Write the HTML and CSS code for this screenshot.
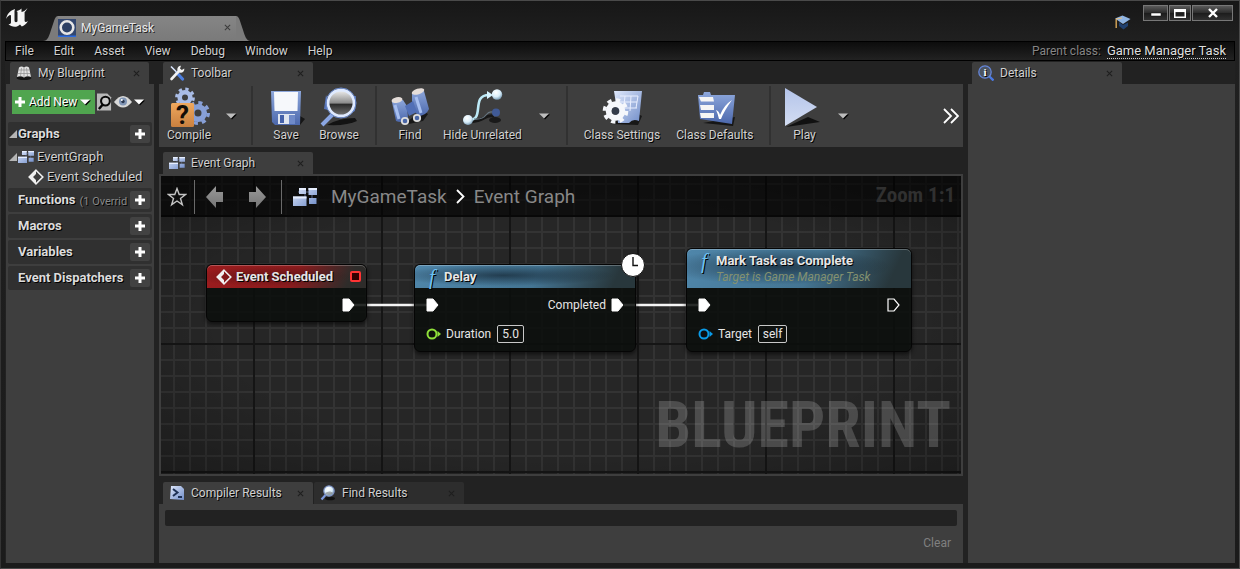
FILE: index.html
```html
<!DOCTYPE html>
<html lang="en">
<head>
<meta charset="utf-8">
<title>MyGameTask</title>
<link rel="stylesheet" href="styles.css">
</head>
<body>
<svg class="defs" width="0" height="0" aria-hidden="true">
  <defs>
    <linearGradient id="blue" x1="0" y1="0" x2="1" y2="1"><stop offset="0" stop-color="#dfe8fb"/><stop offset="1" stop-color="#6f8cc8"/></linearGradient>
    <linearGradient id="pale" x1="0" y1="0" x2="0" y2="1"><stop offset="0" stop-color="#b4c4ea"/><stop offset="1" stop-color="#d3ddf2"/></linearGradient>
    <linearGradient id="deep" x1="0" y1="0" x2="0" y2="1"><stop offset="0" stop-color="#8ea8dc"/><stop offset="1" stop-color="#4c68ac"/></linearGradient>
    <linearGradient id="orange" x1="0" y1="0" x2="0" y2="1"><stop offset="0" stop-color="#efa85e"/><stop offset="1" stop-color="#c9803f"/></linearGradient>
    <linearGradient id="grey" x1="0" y1="0" x2="0" y2="1"><stop offset="0" stop-color="#9a9a9a"/><stop offset="1" stop-color="#747474"/></linearGradient>
    <linearGradient id="lens" x1="0" y1="0" x2="0" y2="1"><stop offset="0" stop-color="#f2f2f2"/><stop offset=".5" stop-color="#8b8b8b"/><stop offset=".55" stop-color="#2b2b2b"/><stop offset="1" stop-color="#777"/></linearGradient>
    <radialGradient id="ball" cx=".4" cy=".3" r=".7"><stop offset="0" stop-color="#fff"/><stop offset=".6" stop-color="#d9eefa"/><stop offset="1" stop-color="#7fa0b8"/></radialGradient>
    <symbol id="graph" viewBox="0 0 24 20">
      <path d="M5 5h14M12 5v8M19 8v4" stroke="#5d6a8c" fill="none"/>
      <path d="M6 1h7v6H6zM15.500 1H24v7h-8.500zM0 9.500h13.500V19H0zM16 11h7.500v6H16z" fill="url(#blue)"/>
      <path d="M6 1h7v2H6zM15.500 1H24v2h-8.500zM0 9.500h13.500v2H0z" fill="#e6eeff"/>
    </symbol>
    <symbol id="plus" viewBox="0 0 12 12"><path d="M4.500 1h3v3.500H11v3H7.500V11h-3V7.500H1v-3h3.500z" fill="#fff"/></symbol>
    <symbol id="diamond" viewBox="0 0 16 16"><path d="M8 1.200 14.800 8 8 14.800 1.200 8z" fill="none" stroke="#f0f0f0" stroke-width="1.600"/><path d="M8 1 1 8l7 7v-4L5 8l3-3z" fill="#f0f0f0"/></symbol>
    <symbol id="down" viewBox="0 0 10 6"><path d="M0 .500h10L5 5.500z" fill="currentColor"/></symbol>
    <symbol id="pin" viewBox="0 0 13 14"><path d="M1 1h6l5 6-5 6H1z" fill="#fff" stroke="#fff" stroke-linejoin="round"/></symbol>
    <symbol id="glass" viewBox="0 0 16 16"><ellipse cx="10" cy="13.500" rx="5" ry="1.800" fill="#111"/><path d="m5.500 10-4 4.500" stroke="#7e9be0" stroke-width="2.200"/><circle cx="9" cy="6" r="5.200" fill="url(#ball)" stroke="#7b8fc0" stroke-width="1.200"/><path d="M5 8a5 5 0 0 0 8 0c-2-2-5-2-8 0z" fill="#777" opacity=".6"/></symbol>
    <symbol id="x" viewBox="0 0 8 8"><path d="m1 1 6 6M7 1 1 7" stroke="currentColor" stroke-width="1.200"/></symbol>
  </defs>
</svg>

<div class="window">
  <header class="titlebar">
    <svg class="logo" viewBox="0 0 24 20" aria-label="Unreal Engine"><path fill="#f4f4f4" d="M0 11C1 6 4 2.500 9 1L8.500 3v9.500c0 1.800 2 2.200 3 .8V4.500c0-.9-.5-1.200-1.300-1.300C12 2.800 14 2 15.500.600V4c2.500-.6 4-1.700 6-4-.8 1.900-2 3.500-2.900 4v9c.4 1.300 1.800 1.300 3.400-.1-1.500 3.100-4 4.500-6.200 5.700L14 16.500c-1.600 1.500-3.400 2.300-5.200 2.300-2.500 0-4.700-1-6.300-2.800 1.600.3 2.500-.3 2.500-1.700V8.500C5 7.200 4.600 6.700 3.500 7.300 2 8.100 1 9.300 0 11z"/></svg>
    <div class="doc-tab">
      <svg class="doc-edge" viewBox="0 0 15 25"><path d="M0 25C5 25 6 20 8 14L11 5Q12.500 0 15 0V25z"/></svg>
      <div class="doc-body">
        <svg class="doc-icon" viewBox="0 0 18 18"><path fill="#33476f" d="M0 0h18v18H0z"/><path fill="#2b6be0" d="M0 16.500h18V18H0z"/><circle cx="9" cy="8.500" r="6.300" fill="#2d4064" stroke="#e6e6e6" stroke-width="2.600"/></svg>
        <span class="doc-name">MyGameTask</span>
        <button class="close" aria-label="Close MyGameTask"><svg><use href="#x"/></svg></button>
      </div>
      <svg class="doc-edge" viewBox="0 0 15 25"><path d="M0 0Q2.500 0 4 5L7 14C9 20 10 25 15 25H0z"/></svg>
    </div>
    <div class="title-right">
      <button class="tutorial" aria-label="Tutorials"><svg viewBox="0 0 16 16"><path fill="#20406e" d="m4 7 4 3 5-2.500V11l-4.500 3.500L4 11z"/><path fill="#8fb4e2" d="M0 3.500 7.500.500 15.500 4 8 9z"/><path d="m1.200 4 0 9" stroke="#d9a85a" stroke-width="1.400"/><path d="m1 4 6-1" stroke="#e8c080"/></svg></button>
      <div class="win-buttons">
        <button aria-label="Minimize"><svg viewBox="0 0 12 12"><path fill="#fff" stroke="#111" stroke-width=".5" d="M1 6h10v3H1z"/></svg></button>
        <button class="win-max" aria-label="Maximize"><svg viewBox="0 0 12 12"><path fill="#fff" fill-rule="evenodd" d="M0 2h12v9H0zM1.500 5v4.500h9V5z"/></svg></button>
        <button class="win-close" aria-label="Close"><svg viewBox="0 0 12 12"><path d="m2 2 8 8M10 2l-8 8" stroke="#fff" stroke-width="2.400"/></svg></button>
      </div>
    </div>
  </header>

  <nav class="menubar" aria-label="Main menu">
    <button>File</button><button>Edit</button><button>Asset</button><button>View</button><button>Debug</button><button>Window</button><button>Help</button>
    <span class="parent-label">Parent class:</span><a href="#parent" class="parent-link">Game Manager Task</a>
  </nav>

  <main class="workspace">
    <aside class="column">
      <div class="tabs"><div class="tab tab-short">
        <svg class="ic16" viewBox="0 0 16 16"><ellipse cx="8" cy="13" rx="7.500" ry="2" fill="#151515"/><path fill="#e2e2e2" d="M3 2.500q2.500-1.800 5 0q2.500-1.800 5 0l2 9.500q-3.500-1.500-7 .5q-3.500-2-7-.5z"/><path d="M8 2.500v10M5.500 3l-1 8M10.500 3l1 8M3 5h10M2 8.500h12" stroke="#8e8e8e" stroke-width=".7"/></svg>
        <span>My Blueprint</span><button class="close" aria-label="Close My Blueprint"><svg><use href="#x"/></svg></button></div></div>
      <section class="panel blueprint">
        <div class="bp-tools">
          <button class="add-new"><svg class="ic12"><use href="#plus"/></svg>Add New<svg class="caret"><use href="#down"/></svg></button>
          <button class="find-btn" aria-label="Search"><svg viewBox="0 0 16 18"><path fill="#b8b8b8" d="M0 0h11l4 4v14H0z"/><circle cx="9" cy="8" r="4.700" fill="#c9c9c9" stroke="#080808" stroke-width="2.200"/><path d="m6 12-4 4.500" stroke="#080808" stroke-width="2.600"/></svg></button>
          <button class="view-btn" aria-label="View options"><svg class="eye" viewBox="0 0 18 12"><path fill="#d8d8d8" d="M0 6q9-12 18 0-9 11-18 0z"/><circle cx="9" cy="5.500" r="4" fill="#8095b5"/><circle cx="9" cy="5.500" r="1.700" fill="#2a3850"/><circle cx="7.800" cy="4" r="1" fill="#fff"/></svg><svg class="caret"><use href="#down"/></svg></button>
        </div>
        <div class="category"><svg class="expander" viewBox="0 0 7 7"><path d="M7 0v7H0z"/></svg><h2>Graphs</h2><button aria-label="Add graph"><svg class="ic12"><use href="#plus"/></svg></button></div>
        <div class="tree">
          <div class="tree-row"><svg class="expander" viewBox="0 0 7 7"><path d="M7 0v7H0z"/></svg><svg class="ic16"><use href="#graph"/></svg>EventGraph</div>
          <div class="tree-row tree-child"><svg class="ic16"><use href="#diamond"/></svg>Event Scheduled</div>
        </div>
        <div class="category"><h2>Functions</h2><small>(1 Overrid</small><button aria-label="Add function"><svg class="ic12"><use href="#plus"/></svg></button></div>
        <div class="category"><h2>Macros</h2><button aria-label="Add macro"><svg class="ic12"><use href="#plus"/></svg></button></div>
        <div class="category"><h2>Variables</h2><button aria-label="Add variable"><svg class="ic12"><use href="#plus"/></svg></button></div>
        <div class="category"><h2>Event Dispatchers</h2><button aria-label="Add event dispatcher"><svg class="ic12"><use href="#plus"/></svg></button></div>
      </section>
    </aside>

    <div class="column">
      <div class="tabs"><div class="tab">
        <svg class="ic16" viewBox="0 0 16 16"><path d="m2 1.500 6 6" stroke="#dce8ff" stroke-width="1.600"/><path d="m8 8 5.500 6" stroke="#4d7fe0" stroke-width="3.200" stroke-linecap="round"/><path d="m2.500 14 8-8.500" stroke="#f2f2f2" stroke-width="2.600" stroke-linecap="round"/><path d="M15.200 3.500A3.500 3.500 0 1 1 12 .800L11 3.500 12.800 5z" fill="#f2f2f2"/></svg>
        <span>Toolbar</span><button class="close" aria-label="Close Toolbar"><svg><use href="#x"/></svg></button></div></div>
      <div class="toolbar">
        <button class="tool"><svg viewBox="0 0 40 40"><g fill="none"><circle cx="16" cy="10.500" r="5.300" stroke="#a9bce6" stroke-width="4.600"/><circle cx="16" cy="10.500" r="8.400" stroke="#a9bce6" stroke-width="3" stroke-dasharray="3.300 3.300"/><circle cx="29" cy="26" r="6.300" stroke="#879fd6" stroke-width="5.600"/><circle cx="29" cy="26" r="10.300" stroke="#879fd6" stroke-width="3.400" stroke-dasharray="4.045 4.045"/></g><rect x="2" y="16" width="23" height="24" rx="1.500" fill="url(#orange)"/><text x="13.500" y="37" text-anchor="middle" class="question">?</text></svg><span>Compile</span></button>
        <button class="drop drop-narrow" aria-label="Compile options"><svg class="caret"><use href="#down"/></svg></button>
        <i class="sep"></i>
        <button class="tool"><svg viewBox="0 0 40 40"><path fill="#161616" d="m10 37 24 1 5-6-5-3z"/><path fill="url(#deep)" d="M5 4h30l-1 34H9l-3-3z"/><path fill="#f6f8fb" d="M8 5h24l-.5 19h-23z"/><path fill="#dfe5f0" d="M12 27h17v10H12z"/><path fill="#4461aa" d="M14 28h4v8h-4z"/><path fill="#6f8ac8" d="M23 28h6v9h-6z"/></svg><span>Save</span></button>
        <button class="tool"><svg viewBox="0 0 40 40"><path fill="#131313" d="M8 38q12-7 28-7l2 3q-10 5-30 4z"/><path d="M7 8 5 22l8 2M34 9h3l-1 15-6 3" fill="#5774b8"/><path d="m14 27-11 11" stroke="#8ba7e4" stroke-width="4"/><circle cx="22" cy="16" r="13" fill="url(#lens)" stroke="#dfeaff" stroke-width="2.800"/><circle cx="22" cy="16" r="15" fill="none" stroke="#6c8bcc"/></svg><span>Browse</span></button>
        <i class="sep"></i>
        <button class="tool"><svg viewBox="0 0 40 40"><path fill="#171717" d="m14 38 19-4 5-7-7-4z"/><path fill="url(#deep)" d="M2 15q5-4 11-2l4 6 1 12q-5 6-12 3z"/><path fill="url(#deep)" d="M22 6q6-5 12-2l5 18q-3 7-11 7l-6-9z"/><path d="m15 19 8-5 4 11-8 4z" fill="#516fb6"/><path d="m5 18 4 14M26 10l5 16" stroke="#a7bff0" stroke-width="3"/><ellipse cx="7" cy="13" rx="5.500" ry="2.800" fill="#e5ddd9" transform="rotate(-12 7 13)"/><ellipse cx="28" cy="4.500" rx="6.500" ry="2.800" fill="#e5ddd9" transform="rotate(-18 28 4.500)"/><circle cx="15" cy="34" r="3.200" fill="#4966a7" stroke="#ddd" stroke-width="1.800"/><circle cx="27" cy="31" r="3.200" fill="#4966a7" stroke="#ddd" stroke-width="1.800"/></svg><span>Find</span></button>
        <button class="tool"><svg viewBox="0 0 40 40"><path d="M8 35q9-1 14-4t10-2" stroke="#161616" stroke-width="3" fill="none"/><ellipse cx="33" cy="33" rx="6" ry="3" fill="#1a1a1a"/><path d="M6 33C24 34 8 8 27 8" stroke="#bdeaf7" stroke-width="2.600" fill="none"/><path fill="#d6f4ff" d="m25 4 6 4-6 4z"/><path d="M12 32q8 1 12-4t8-2" stroke="#65747f" stroke-width="1.200" fill="none"/><circle cx="6" cy="33" r="5" fill="url(#ball)"/><circle cx="35" cy="7.500" r="5.200" fill="url(#ball)"/><circle cx="34" cy="25.500" r="4" fill="#405a96"/></svg><span>Hide Unrelated</span></button>
        <button class="drop" aria-label="Hide Unrelated options"><svg class="caret"><use href="#down"/></svg></button>
        <i class="sep"></i>
        <button class="tool"><svg viewBox="0 0 40 40"><path fill="#171717" d="m9 37 27 1 4-9-8-4z"/><path fill="url(#blue)" d="M12 4h28l-3 30q-6-3-10 2H16q-1-15-4-32z"/><path d="M18 9h18M17 15h18M20 21h15M23 9l-1 9M29 9l-1 15M36 9l-2 12" stroke="#e9efff" fill="none"/><circle cx="13.500" cy="24" r="6.800" fill="none" stroke="#f5f7fb" stroke-width="6"/><circle cx="13.500" cy="24" r="11" fill="none" stroke="#f5f7fb" stroke-width="3.600" stroke-dasharray="4.320 4.320"/><circle cx="13.500" cy="24" r="3.800" fill="#333b49"/></svg><span>Class Settings</span></button>
        <button class="tool"><svg viewBox="0 0 40 40"><path fill="#161616" d="m8 36 30 3 2-9z"/><path fill="url(#deep)" d="M3 8h5l1-3h6l1 3h24l-3 29L5 32z"/><path d="M4 10h14l1 4.500H6zM5 18h14v5H6zM5 26h14v5H6z" fill="#f5f5f5"/><path d="M21 23q3 1 4 5 4-10 12-15-8 11-11 19h-2q-1-5-3-9z" fill="#fff"/></svg><span>Class Defaults</span></button>
        <i class="sep"></i>
        <button class="tool"><svg viewBox="0 0 40 40"><path fill="#111" d="m2 40 34-5-12-5z"/><path fill="url(#pale)" d="M1 1 33 20 1 39z"/></svg><span>Play</span></button>
        <button class="drop" aria-label="Play options"><svg class="caret"><use href="#down"/></svg></button>
        <button class="more" aria-label="More tools"><svg viewBox="0 0 16 16"><path d="m1 1 7 7-7 7M8 1l7 7-7 7" fill="none" stroke="#fff" stroke-width="1.800"/></svg></button>
      </div>

      <div class="tabs tabs-graph"><div class="tab"><svg class="ic16"><use href="#graph"/></svg><span>Event Graph</span><button class="close" aria-label="Close Event Graph"><svg><use href="#x"/></svg></button></div></div>
      <section class="canvas" aria-label="Event Graph">
        <div class="crumbs">
          <button aria-label="Favorite"><svg class="star" viewBox="0 0 20 20"><path d="m10 1.500 2.200 6h6.300l-5 3.900 1.900 6.300L10 14l-5.400 3.700 1.900-6.300-5-3.900h6.300z" fill="none" stroke="#c4c4c4" stroke-width="1.400"/></svg></button>
          <i class="crumb-sep"></i>
          <button class="nav" aria-label="Back"><svg viewBox="0 0 18 22"><path d="M0 11 10 0v6h7v10h-7v6z" fill="url(#grey)"/></svg></button>
          <button class="nav" aria-label="Forward"><svg viewBox="0 0 18 22"><path d="M18 11 8 0v6H1v10h7v6z" fill="url(#grey)"/></svg></button>
          <i class="crumb-sep"></i>
          <svg class="crumb-icon"><use href="#graph"/></svg>
          <button class="crumb">MyGameTask</button>
          <svg class="crumb-arrow" viewBox="0 0 9 15"><path d="m1 1 6.500 6.500L1 14" fill="none" stroke="#fff" stroke-width="1.800"/></svg>
          <button class="crumb">Event Graph</button>
          <span class="zoom">Zoom 1:1</span>
        </div>
        <div class="watermark">BLUEPRINT</div>
        <svg class="wires" aria-hidden="true"><path d="M192 129h75M463 129h74" stroke="#f4f4f4" stroke-width="2.600"/></svg>

        <article class="node node-event">
          <header class="node-head"><svg class="ic16"><use href="#diamond"/></svg><h3>Event Scheduled</h3><span class="delegate"></span></header>
          <div class="pins"><span class="pin-row pin-end"><svg class="exec"><use href="#pin"/></svg></span></div>
        </article>

        <article class="node node-delay">
          <header class="node-head"><i class="fn">f</i><h3>Delay</h3></header>
          <div class="pins">
            <div class="pin-row"><svg class="exec"><use href="#pin"/></svg><span class="pin-end">Completed<svg class="exec"><use href="#pin"/></svg></span></div>
            <div class="pin-row"><svg class="data" viewBox="0 0 15 12"><circle cx="6" cy="6" r="4.500" fill="#0d120b" stroke="#8fe03a" stroke-width="2"/><path d="m11.500 3 3.500 3-3.500 3z" fill="#8fe03a"/></svg><label for="duration">Duration</label><input id="duration" class="value" value="5.0"></div>
          </div>
          <svg class="clock" viewBox="0 0 24 24"><circle cx="12" cy="12" r="11.500" fill="#fff" stroke="#111"/><path d="M12 4v8.500h5" fill="none" stroke="#111" stroke-width="1.400"/></svg>
        </article>

        <article class="node node-mark">
          <header class="node-head"><i class="fn">f</i><div><h3>Mark Task as Complete</h3><p>Target is Game Manager Task</p></div></header>
          <div class="pins">
            <div class="pin-row"><svg class="exec"><use href="#pin"/></svg><span class="pin-end"><svg class="exec" viewBox="0 0 13 14"><path d="M1 1h6l5 6-5 6H1z" fill="none" stroke="#fff" stroke-width="1.200"/></svg></span></div>
            <div class="pin-row"><svg class="data" viewBox="0 0 15 12"><circle cx="6" cy="6" r="4.500" fill="#0b0f12" stroke="#0a9be8" stroke-width="2"/><path d="m11.500 3 3.500 3-3.500 3z" fill="#0a9be8"/></svg><label for="target">Target</label><input id="target" class="value value-self" value="self"></div>
          </div>
        </article>
      </section>

      <div class="tabs tabs-results">
        <div class="tab"><svg class="ic16" viewBox="0 0 16 16"><path fill="url(#blue)" d="M2 1h10l3 3v11L1 14z"/><path d="m4 4 4.500 3.500L4 11M9 12h4" fill="none" stroke="#1e3155" stroke-width="2"/></svg><span>Compiler Results</span><button class="close" aria-label="Close Compiler Results"><svg><use href="#x"/></svg></button></div>
        <div class="tab tab-idle"><svg class="ic16"><use href="#glass"/></svg><span>Find Results</span><button class="close" aria-label="Close Find Results"><svg><use href="#x"/></svg></button></div>
      </div>
      <section class="results"><div class="log" role="log"></div><button class="clear">Clear</button></section>
    </div>

    <aside class="column">
      <div class="tabs"><div class="tab"><svg class="ic16" viewBox="0 0 16 16"><path d="m11 11 4.500 4.500" stroke="#4a78e0" stroke-width="2.400"/><circle cx="7" cy="7" r="6.200" fill="#4c5563" stroke="#6485d8" stroke-width="1.300"/><text x="7" y="11" text-anchor="middle" class="info">i</text></svg><span>Details</span><button class="close" aria-label="Close Details"><svg><use href="#x"/></svg></button></div></div>
      <section class="panel"></section>
    </aside>
  </main>
</div>
</body>
</html>
```
FILE: styles.css
```css
* { box-sizing: border-box; }
body { margin: 0; background: #1b1b1b; color: #d0d0d0; font: 12px/16px Roboto, "Liberation Sans", sans-serif; }
button { margin: 0; padding: 0; border: 0; background: none; color: inherit; font: inherit; text-shadow: inherit; }
svg { display: block; flex: none; }
h2, h3, p { margin: 0; }
h2, h3 { font-size: 13px; }
.defs { position: absolute; }

.window { display: flex; flex-direction: column; min-height: 100vh; padding: 0 4px 5px; border: 1px solid #4a4a4a; border-left-color: #343434; text-shadow: 1px 1px 0 #000; background: linear-gradient(#171717, #202020 40px, #1b1b1b); }

.titlebar { display: flex; align-items: flex-start; height: 40px; }
.logo { width: 24px; height: 20px; margin: 7px 0 0 1px; overflow: visible; }
.doc-tab { display: flex; margin: 15px 0 0 13px; height: 25px; }
.doc-edge { width: 15px; height: 25px; fill: #7b7b7b; }
.doc-body { display: flex; align-items: center; width: 178px; padding: 0 3px 2px 0; background: linear-gradient(#858585, #7a7a7a); color: #e8e8e8; }
.doc-body .close { color: #3c3c3c; }
.doc-icon { width: 18px; height: 18px; margin-right: 5px; }
.doc-name { text-shadow: 1px 1px 0 #222; }
.title-right { display: flex; margin-left: auto; }
.tutorial svg { width: 16px; height: 16px; }
.tutorial { margin: 14px 12px 0 0; height: 16px; }
.win-buttons { display: flex; gap: 1px; margin: 4px 2px 0 0; }
.win-buttons button { display: grid; place-items: center; width: 25px; height: 16px; border: 1px solid #777; background: linear-gradient(#5a5a5a, #2b2b2b 50%, #1c1c1c 51%, #303030); }
.win-buttons .win-max { width: 22px; }
.win-buttons .win-close { width: 41px; }
.win-buttons svg { width: 12px; height: 12px; }

.close { display: grid; place-items: center; width: 12px; height: 12px; margin-left: auto; color: #1e1e1e; }
.close svg { width: 7px; height: 7px; }

.menubar { display: flex; align-items: center; height: 20px; padding: 0 8px 0 9px; border: 1px solid #000; background: linear-gradient(#0c0c0c, #222); }
.menubar button { margin-right: 20px; }
.parent-label { margin-left: auto; margin-right: 6px; color: #858585; }
.parent-link { color: #dedede; font-size: 13px; line-height: 15px; text-decoration: none; border-bottom: 1px dotted #ccc; }

.workspace { flex: 1; display: grid; grid-template-columns: 148fr 804fr 267fr; gap: 5px; padding: 1px 0 0 1px; background: #222; }
.column { display: flex; flex-direction: column; min-width: 0; }
.tabs { display: flex; gap: 1px; padding-left: 4px; height: 22px; }
.tabs-graph { margin-top: 5px; }
.tabs-results { margin-top: 6px; }
.tab { display: flex; align-items: center; gap: 6px; width: 150px; padding: 0 7px 0 6px; border-radius: 2px 2px 0 0; background: #3e3e3e; }
.tab-short { width: 139px; }
.tab-idle { background: #2d2d2d; }
.ic16 { width: 16px; height: 16px; }
.ic12 { width: 12px; height: 12px; }
.info { font: bold 11px "Liberation Serif", serif; fill: #fff; }
.panel { flex: 1; background: #3e3e3e; }

.blueprint { padding: 6px 2px; }
.bp-tools { display: flex; align-items: center; gap: 2px; padding: 0 4px; margin-bottom: 8px; color: #fff; }
.add-new { display: flex; align-items: center; gap: 3px; height: 24px; padding: 0 5px 0 2px; background: #50a54f; }
.caret { width: 10px; height: 6px; filter: drop-shadow(1px 1px 0 #000); }
.find-btn svg { width: 15px; height: 18px; }
.view-btn { display: flex; align-items: center; gap: 2px; }
.eye { width: 18px; height: 12px; }
.category { display: flex; align-items: center; height: 24px; margin-bottom: 2px; padding: 0 2px 0 10px; border-radius: 2px; background: #303030; }
.category .expander { margin-left: -10px; }
.expander { width: 10px; height: 8px; fill: #b5b5b5; }
.category small { margin: 3px 0 0 4px; white-space: nowrap; font-size: 11px; color: #888; }
.category button { display: grid; place-items: center; width: 20px; height: 18px; margin-left: auto; border-radius: 2px; background: #424242; }
h2 { color: #dcdcdc; white-space: nowrap; }
.tree { margin: -1px 0 1px; font-size: 13px; }
.tree-row { display: flex; align-items: center; gap: 3px; height: 20px; white-space: nowrap; }
.tree-row .expander { margin-right: -3px; }
.tree-child { padding-left: 20px; }

.toolbar { display: flex; height: 63px; background: #3e3e3e; }
.tool { display: flex; flex-direction: column; align-items: center; min-width: 50px; padding: 3px 8px 0; white-space: nowrap; }
.tool svg { width: 40px; height: 40px; margin: 0 -4px; overflow: visible; }
.question { font: bold 26px Roboto, sans-serif; fill: #120d08; text-shadow: none; }
.drop { display: grid; place-items: center; width: 28px; color: #bdbdbd; }
.drop-narrow { width: 24px; }
.sep { width: 2px; margin: 2px 8px; background: #313131; }
.more { margin: 0 4px 0 auto; }
.more svg { width: 16px; height: 16px; }

.canvas {
  position: relative; flex: 1; min-height: 240px; border: 2px solid #3e3e3e; overflow: hidden;
  background:
    radial-gradient(ellipse at center, transparent 60%, rgba(0, 0, 0, .35) 110%),
    repeating-linear-gradient(90deg, #151515 0 2px, transparent 2px 128px) 92px 0 / 128px 100%,
    repeating-linear-gradient(#151515 0 2px, transparent 2px 128px) 0 39px / 100% 128px,
    linear-gradient(90deg, #333 2px, transparent 2px) 12px 0 / 16px 100%,
    linear-gradient(#333 2px, transparent 2px) 0 7px / 100% 16px,
    #262626;
}
.crumbs { display: flex; align-items: center; height: 41px; padding: 0 6px; background: rgba(0, 0, 0, .6); color: #888; font-size: 19px; line-height: 24px; text-shadow: none; }
.star { width: 20px; height: 20px; }
.crumb-sep { width: 1px; height: 34px; margin-left: 7px; background: #6a6a6a; }
.nav { margin-left: 11px; }
.nav + .nav { margin-left: 24px; }
.nav svg { width: 18px; height: 22px; }
.nav + .crumb-sep { margin-left: 15px; }
.crumb-icon { width: 24px; height: 20px; margin: 0 14px 0 11px; }
.crumb-arrow { width: 9px; height: 15px; margin: 0 9px; }
.zoom { margin-left: auto; padding-bottom: 3px; font: bold 21px/24px "Roboto Condensed", "Liberation Sans Narrow", Roboto, sans-serif; color: #303030; }
.watermark { position: absolute; right: 10px; bottom: 8px; font: bold 64px/80px "Roboto Condensed", "Liberation Sans Narrow", Roboto, sans-serif; color: rgba(255, 255, 255, .18); text-shadow: none; }
.wires { position: absolute; inset: 0; width: 100%; height: 100%; }

.node { position: absolute; border: 1px solid #050505; border-radius: 6px; background: rgba(11, 15, 12, .88); box-shadow: 0 2px 4px rgba(0, 0, 0, .6); color: #e6e6e6; }
.node-event { left: 45px; top: 88px; width: 161px; height: 58px; }
.node-delay { left: 253px; top: 88px; width: 222px; height: 88px; }
.node-mark { left: 525px; top: 72px; width: 226px; height: 104px; }
.node-head { display: flex; align-items: center; gap: 4px; height: 23px; padding: 0 5px 0 9px; border-radius: 5px 5px 0 0; box-shadow: inset 0 1px 0 rgba(255, 255, 255, .25); background: radial-gradient(ellipse at 40% 45%, rgba(10, 20, 30, .6), transparent 60%), linear-gradient(115deg, #4f86aa 0%, #447593 55%, #28373c 90%); }
.node-event .node-head { background: radial-gradient(ellipse at 40% 50%, rgba(30, 10, 10, .4), transparent 60%), linear-gradient(115deg, #9c1c1e 0%, #8a1b1d 55%, #2e2c2a 88%); }
.node-mark .node-head { height: 39px; align-items: flex-start; padding-top: 4px; }
.node-head p { line-height: 17px; color: #84916f; font-style: italic; text-shadow: none; }
.delegate { width: 11px; height: 11px; margin-left: auto; border: 2px solid #ff3434; border-radius: 2px; background: #300; }
.fn { width: 16px; text-align: center; font: italic 21px/16px "Liberation Serif", serif; color: #6cc0f5; }
.pins { display: flex; flex-direction: column; gap: 9px; padding: 7px 11px 0; text-shadow: none; }
.pin-row { display: flex; align-items: center; height: 20px; }
.pin-end { display: flex; align-items: center; justify-content: flex-end; gap: 5px; margin-left: auto; }
.exec { width: 13px; height: 14px; }
.data { width: 15px; height: 12px; margin-right: 5px; }
.value { width: 27px; height: 18px; margin-left: 6px; padding: 0; border: 1px solid #c8c8c8; border-radius: 2px; background: none; color: #e6e6e6; font: inherit; text-align: center; }
.value-self { width: 29px; }
.clock { position: absolute; top: -12px; right: -10px; width: 24px; height: 24px; }

.results { display: flex; flex-direction: column; align-items: stretch; height: 59px; padding: 6px; background: #3e3e3e; }
.log { height: 16px; border-radius: 2px; background: #222; }
.clear { align-self: flex-end; margin: 9px 6px 0 0; color: #808080; text-shadow: none; }
```
